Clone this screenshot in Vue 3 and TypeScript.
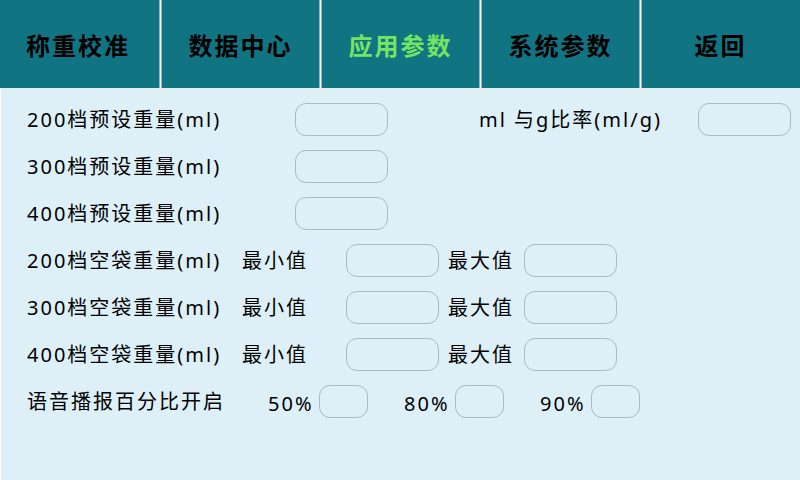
<script setup lang="ts">
import { reactive, ref } from 'vue'

const tabs: string[] = ['称重校准', '数据中心', '应用参数', '系统参数', '返回']
const active = ref('应用参数')

const levels: number[] = [200, 300, 400]
const percents: number[] = [50, 80, 90]

const preset = reactive<Record<number, string>>({ 200: '', 300: '', 400: '' })
const bagMin = reactive<Record<number, string>>({ 200: '', 300: '', 400: '' })
const bagMax = reactive<Record<number, string>>({ 200: '', 300: '', 400: '' })
const announce = reactive<Record<number, boolean>>({ 50: false, 80: false, 90: false })
const ratio = ref('')
</script>

<template>
  <div class="screen">
    <nav class="tabs">
      <button
        v-for="tab in tabs"
        :key="tab"
        type="button"
        class="tab"
        :class="{ active: tab === active }"
        @click="active = tab"
      >{{ tab }}</button>
    </nav>

    <form class="params" @submit.prevent>
      <div v-for="(level, i) in levels" :key="'preset' + level" class="row">
        <label class="preset-label" :for="'preset-' + level">{{ level }}档预设重量(ml)</label>
        <input :id="'preset-' + level" v-model="preset[level]" class="field" type="text" />
        <div v-if="i === 0" class="ratio">
          <label class="ratio-label" for="ratio">ml 与g比率(ml/g)</label>
          <input id="ratio" v-model="ratio" class="field" type="text" />
        </div>
      </div>

      <div v-for="level in levels" :key="'bag' + level" class="row">
        <span class="bag-label">{{ level }}档空袋重量(ml)</span>
        <label class="min-label" :for="'min-' + level">最小值</label>
        <input :id="'min-' + level" v-model="bagMin[level]" class="field" type="text" />
        <label class="max-label" :for="'max-' + level">最大值</label>
        <input :id="'max-' + level" v-model="bagMax[level]" class="field" type="text" />
      </div>

      <div class="row">
        <span class="voice-label">语音播报百分比开启</span>
        <div class="choices">
          <div v-for="p in percents" :key="p" class="choice">
            <label class="percent" :for="'voice-' + p">{{ p }}%</label>
            <input :id="'voice-' + p" v-model="announce[p]" class="box" type="checkbox" />
          </div>
        </div>
      </div>
    </form>
  </div>
</template>

<style>
body {
  background: #ddf0f8;
}
</style>

<style scoped>
.screen {
  min-height: 100vh;
  display: flex;
  flex-direction: column;
  background: #ddf0f8;
  color: #000;
  font-family: "Noto Sans", "Noto Sans CJK SC", sans-serif;
}

.tabs {
  display: grid;
  grid-template-columns: repeat(5, 1fr);
  height: 88px;
  background: #117482;
}

.tab {
  margin: 0;
  padding: 0;
  border: 0;
  background: transparent;
  color: #000;
  font-family: "Noto Sans CJK SC", sans-serif;
  font-size: 24px;
  font-weight: 700;
  letter-spacing: 2px;
  cursor: pointer;
}

.tab:first-child {
  padding-right: 4px;
}

.tab + .tab {
  border-left: 1px solid #fff;
  box-shadow: -1px 0 #8cbac1, inset 1px 0 #8cbac1;
}

.tab.active {
  color: #74e463;
}

.params {
  flex: 1;
  display: flex;
  flex-direction: column;
  gap: 14px;
  padding: 15px 9px 15px 26px;
  border-left: 1px solid #fff;
}

.row {
  display: flex;
  align-items: center;
  height: 33px;
  font-size: 20px;
  line-height: 32px;
  letter-spacing: 2px;
  white-space: nowrap;
}

.preset-label {
  width: 268px;
}

.ratio {
  display: flex;
  align-items: center;
  margin-left: auto;
}

.ratio-label {
  width: 219px;
}

.bag-label {
  width: 215px;
}

.min-label {
  width: 104px;
}

.max-label {
  width: 76px;
  margin-left: 9px;
}

.voice-label {
  width: 241px;
}

.choices {
  display: flex;
  gap: 36px;
}

.choice {
  display: flex;
  align-items: center;
}

.percent {
  width: 51px;
  padding-top: 4px;
}

.field,
.box {
  box-sizing: border-box;
  height: 33px;
  margin: 0;
  border: 1px solid #a9bac2;
  border-radius: 11px;
  background: transparent;
}

.field {
  width: 93px;
  padding: 0 8px;
  font: inherit;
}

.box {
  width: 49px;
  appearance: none;
}

.box:checked {
  background: #117482;
}
</style>
